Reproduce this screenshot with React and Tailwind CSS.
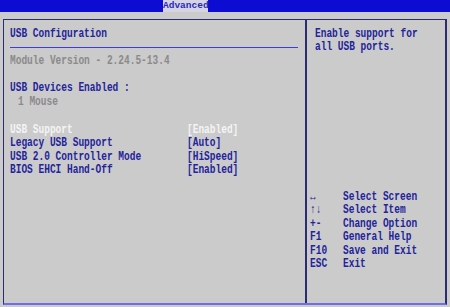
const rows = [
  { label: "USB Support", value: "[Enabled]", active: true },
  { label: "Legacy USB Support", value: "[Auto]" },
  { label: "USB 2.0 Controller Mode", value: "[HiSpeed]" },
  { label: "BIOS EHCI Hand-Off", value: "[Enabled]" },
];

const keys = [
  ["↔", "Select Screen"],
  ["↑↓", "Select Item"],
  ["+-", "Change Option"],
  ["F1", "General Help"],
  ["F10", "Save and Exit"],
  ["ESC", "Exit"],
];

function Line({ children, className = "" }) {
  return (
    <div className={`h-[13.5px] leading-[13.5px] whitespace-pre ${className}`}>
      <span className="inline-block align-middle leading-[9px] origin-center scale-y-[1.25]">{children}</span>
    </div>
  );
}

export default function App() {
  return (
    <div
      className="w-[450px] h-[307px] overflow-hidden bg-[#cbcbcb] text-[9.5px] font-bold text-[#23239a]"
      style={{ fontFamily: '"Liberation Mono", "DejaVu Sans Mono", monospace' }}
    >
      <div className="flex h-[12px] bg-[#0c0cd2]">
        <div className="w-[163px]" />
        <div className="w-[45px] bg-[#d4d4e4] text-[#2a2ab4] text-center leading-[12px]">
          <span className="inline-block">Advanced</span>
        </div>
      </div>
      <div className="px-[3px] pt-[7px]">
        <div className="flex h-[286px] border border-[#2c2c72] border-b-2 border-b-[#6e6ee6] border-r-2 border-r-[#2c2c72]">
          <div className="w-[303px] border-r-2 border-[#2c2c72] pl-[6px] pr-[5px] pt-[7px]">
            <Line>USB Configuration</Line>
            <div className="mt-[6px] h-px w-[288px] bg-[#3c3cdc]" />
            <div className="mt-[7px]">
              <Line className="text-[#8a8a8a]">Module Version - 2.24.5-13.4</Line>
              <Line> </Line>
              <Line>USB Devices Enabled :</Line>
              <Line className="pl-[8px] text-[#8a8a8a]">1 Mouse</Line>
              <div className="h-[14.5px]" />
              {rows.map((r) => (
                <div key={r.label} className={`flex ${r.active ? "text-[#f4f4f4]" : ""}`}>
                  <Line className="w-[177px]">{r.label}</Line>
                  <Line>{r.value}</Line>
                </div>
              ))}
            </div>
          </div>
          <div className="flex flex-1 flex-col pt-[7px]">
            <div className="pl-[8px]">
              <Line>Enable support for</Line>
              <Line>all USB ports.</Line>
            </div>
            <div className="mt-[136px] pl-[3px]">
              {keys.map(([k, d]) => (
                <div key={k} className="flex">
                  <Line className="w-[33px]">{k}</Line>
                  <Line>{d}</Line>
                </div>
              ))}
            </div>
          </div>
        </div>
      </div>
    </div>
  );
}
